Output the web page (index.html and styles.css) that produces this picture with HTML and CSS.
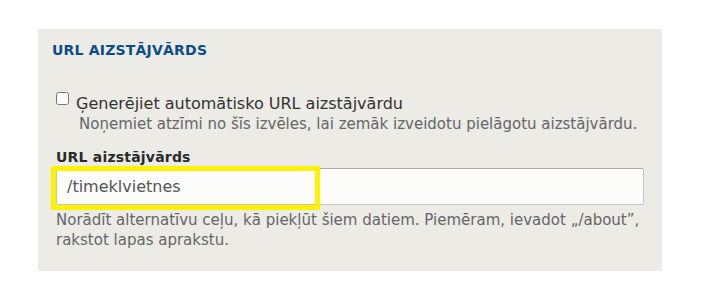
FILE: index.html
```html
<!DOCTYPE html>
<html>
<head>
    <meta charset="UTF-8">
    <title>URL aizstājvārds</title>
    <link rel="stylesheet" href="styles.css">
</head>
<body>
    <div class="panel">
        <h2 class="panel-title">URL aizstājvārds</h2>

        <div class="form-item checkbox-item">
            <label class="option">
                <input type="checkbox">
                <span>Ģenerējiet automātisko URL aizstājvārdu</span>
            </label>
            <div class="description indent">Noņemiet atzīmi no šīs izvēles, lai zemāk izveidotu pielāgotu aizstājvārdu.</div>
        </div>

        <div class="form-item">
            <label class="field-label" for="alias">URL aizstājvārds</label>
            <div class="input-wrap">
                <input type="text" id="alias" class="text-input" value="/timeklvietnes">
                <div class="highlight"></div>
            </div>
            <div class="description after-input">Norādīt alternatīvu ceļu, kā piekļūt šiem datiem. Piemēram, ievadot „/about”, rakstot lapas aprakstu.</div>
        </div>
    </div>
</body>
</html>
```

FILE: styles.css
```css
body {
    margin: 0;
    background: #ffffff;
    font-family: "DejaVu Sans", sans-serif;
    color: #333;
}
.panel {
    margin: 29px 0 0 38px;
    width: 624px;
    height: 242px;
    box-sizing: border-box;
    background: #ecebe6;
    padding: 11px 18px 0 18px;
}
.panel-title {
    margin: 0 0 0 -4px;
    font-size: 14px;
    font-weight: bold;
    letter-spacing: 0.2px;
    text-transform: uppercase;
    color: #0a4e86;
    line-height: 20px;
}
.form-item {
    margin-top: 13px;
}
.checkbox-item {
    margin-top: 34px;
}
.option {
    display: flex;
    align-items: flex-start;
    gap: 7px;
    font-size: 16px;
    line-height: 20px;
    color: #333;
}
.option input {
    margin: -2px 0 0 0;
    width: 13px;
    height: 13px;
}
.description {
    font-size: 15px;
    line-height: 20px;
    color: #666;
}
.indent {
    margin-left: 23px;
}
.after-input {
    margin-top: 5px;
}
.field-label {
    display: block;
    font-size: 14px;
    font-weight: bold;
    letter-spacing: 0.2px;
    line-height: 20px;
    color: #2a2a2a;
}
.input-wrap {
    position: relative;
    margin-top: 1px;
}
.text-input {
    display: block;
    width: 100%;
    height: 37px;
    box-sizing: border-box;
    margin: 0;
    padding: 0 10px;
    border: 1px solid #c8c8c3;
    border-top-color: #a9a9a4;
    border-radius: 2px;
    background: #fcfcfa;
    font-family: "DejaVu Sans", sans-serif;
    font-size: 16px;
    color: #555;
}
.highlight {
    position: absolute;
    left: -5px;
    top: -2px;
    width: 269px;
    height: 44px;
    box-sizing: border-box;
    border: 5px solid #fff200;
    pointer-events: none;
}
```
